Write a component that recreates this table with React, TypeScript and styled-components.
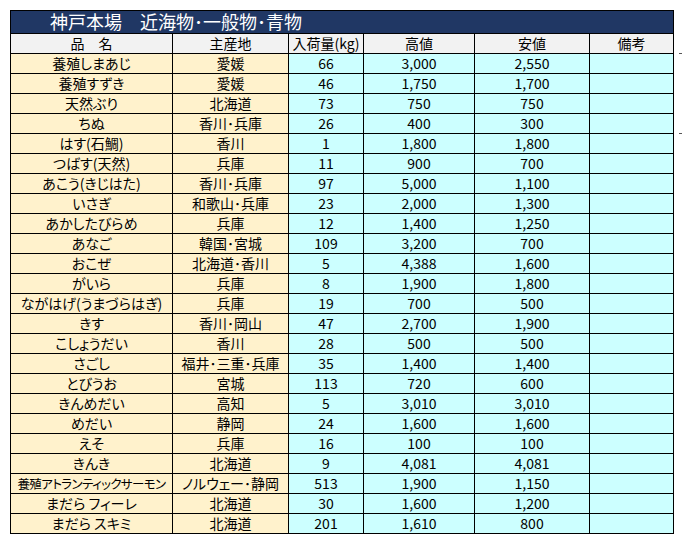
import styled, { createGlobalStyle } from 'styled-components';

const GlobalStyle = createGlobalStyle`
	html, body {
		margin: 0;
		padding: 0;
		background: #ffffff;
	}
	body {
		font-family: 'Noto Sans CJK JP', 'Noto Sans', sans-serif;
	}
`;

const Page = styled.div`
	position: relative;
	width: 683px;
	height: 546px;
	padding: 10px 0 0 10px;
	box-sizing: border-box;
`;

const Sheet = styled.table`
	width: 663px;
	border-collapse: collapse;
	table-layout: fixed;
	font-size: 14px;
	font-feature-settings: 'palt';
	color: #000;
`;

const TitleCell = styled.th`
	height: 22px;
	padding: 0 0 2px 39px;
	box-sizing: border-box;
	background: #203764;
	color: #ffffff;
	font-size: 18px;
	font-weight: normal;
	text-align: left;
	line-height: 20px;
	vertical-align: top;
	border: 1px solid #000;
`;

const HeadCell = styled.th`
	height: 19px;
	padding: 0;
	background: #f2f2f2;
	font-weight: normal;
	text-align: center;
	line-height: 19px;
	border: 1px solid #000;
	white-space: nowrap;
	overflow: hidden;
`;

const Cell = styled.td<{ $tone: 'cream' | 'cyan'; $tight?: boolean }>`
	height: 19px;
	padding: 0;
	background: ${(p) => (p.$tone === 'cream' ? '#fff2cc' : '#ccffff')};
	text-align: center;
	line-height: 19px;
	border: 1px solid #000;
	white-space: nowrap;
	overflow: hidden;
	font-size: ${(p) => (p.$tight ? '12.5px' : '14px')};
	letter-spacing: ${(p) => (p.$tight ? '-0.6px' : '0')};
`;

const BreakMark = styled.span<{ $top: number }>`
	position: absolute;
	right: 1px;
	top: ${(p) => p.$top}px;
	width: 3px;
	height: 1px;
	background: #555;
`;

type Row = [string, string, string, string, string];

const rows: Row[] = [
	['養殖しまあじ', '愛媛', '66', '3,000', '2,550'],
	['養殖すずき', '愛媛', '46', '1,750', '1,700'],
	['天然ぶり', '北海道', '73', '750', '750'],
	['ちぬ', '香川･兵庫', '26', '400', '300'],
	['はす(石鯛)', '香川', '1', '1,800', '1,800'],
	['つばす(天然)', '兵庫', '11', '900', '700'],
	['あこう(きじはた)', '香川･兵庫', '97', '5,000', '1,100'],
	['いさぎ', '和歌山･兵庫', '23', '2,000', '1,300'],
	['あかしたびらめ', '兵庫', '12', '1,400', '1,250'],
	['あなご', '韓国･宮城', '109', '3,200', '700'],
	['おこぜ', '北海道･香川', '5', '4,388', '1,600'],
	['がいら', '兵庫', '8', '1,900', '1,800'],
	['ながはげ(うまづらはぎ)', '兵庫', '19', '700', '500'],
	['きす', '香川･岡山', '47', '2,700', '1,900'],
	['こしょうだい', '香川', '28', '500', '500'],
	['さごし', '福井･三重･兵庫', '35', '1,400', '1,400'],
	['とびうお', '宮城', '113', '720', '600'],
	['きんめだい', '高知', '5', '3,010', '3,010'],
	['めだい', '静岡', '24', '1,600', '1,600'],
	['えそ', '兵庫', '16', '100', '100'],
	['きんき', '北海道', '9', '4,081', '4,081'],
	['養殖アトランティックサーモン', 'ノルウェー･静岡', '513', '1,900', '1,150'],
	['まだら フィーレ', '北海道', '30', '1,600', '1,200'],
	['まだら スキミ', '北海道', '201', '1,610', '800'],
];

const widths = [162, 116, 75, 111, 115, 84];

const App = () => {
	return (
		<Page>
			<GlobalStyle />
			<Sheet>
				<colgroup>
					{widths.map((w, i) => (
						<col key={i} style={{ width: w }} />
					))}
				</colgroup>
				<thead>
					<tr>
						<TitleCell colSpan={6}>神戸本場　近海物･一般物･青物</TitleCell>
					</tr>
					<tr>
						<HeadCell>品　名</HeadCell>
						<HeadCell>主産地</HeadCell>
						<HeadCell>入荷量(kg)</HeadCell>
						<HeadCell>高値</HeadCell>
						<HeadCell>安値</HeadCell>
						<HeadCell>備考</HeadCell>
					</tr>
				</thead>
				<tbody>
					{rows.map((r) => (
						<tr key={r[0]}>
							<Cell $tone="cream" $tight={r[0].length > 12}>{r[0]}</Cell>
							<Cell $tone="cream">{r[1]}</Cell>
							<Cell $tone="cyan">{r[2]}</Cell>
							<Cell $tone="cyan">{r[3]}</Cell>
							<Cell $tone="cyan">{r[4]}</Cell>
							<Cell $tone="cyan" />
						</tr>
					))}
				</tbody>
			</Sheet>
			<BreakMark $top={53} />
			<BreakMark $top={133} />
		</Page>
	);
};

export default App;
